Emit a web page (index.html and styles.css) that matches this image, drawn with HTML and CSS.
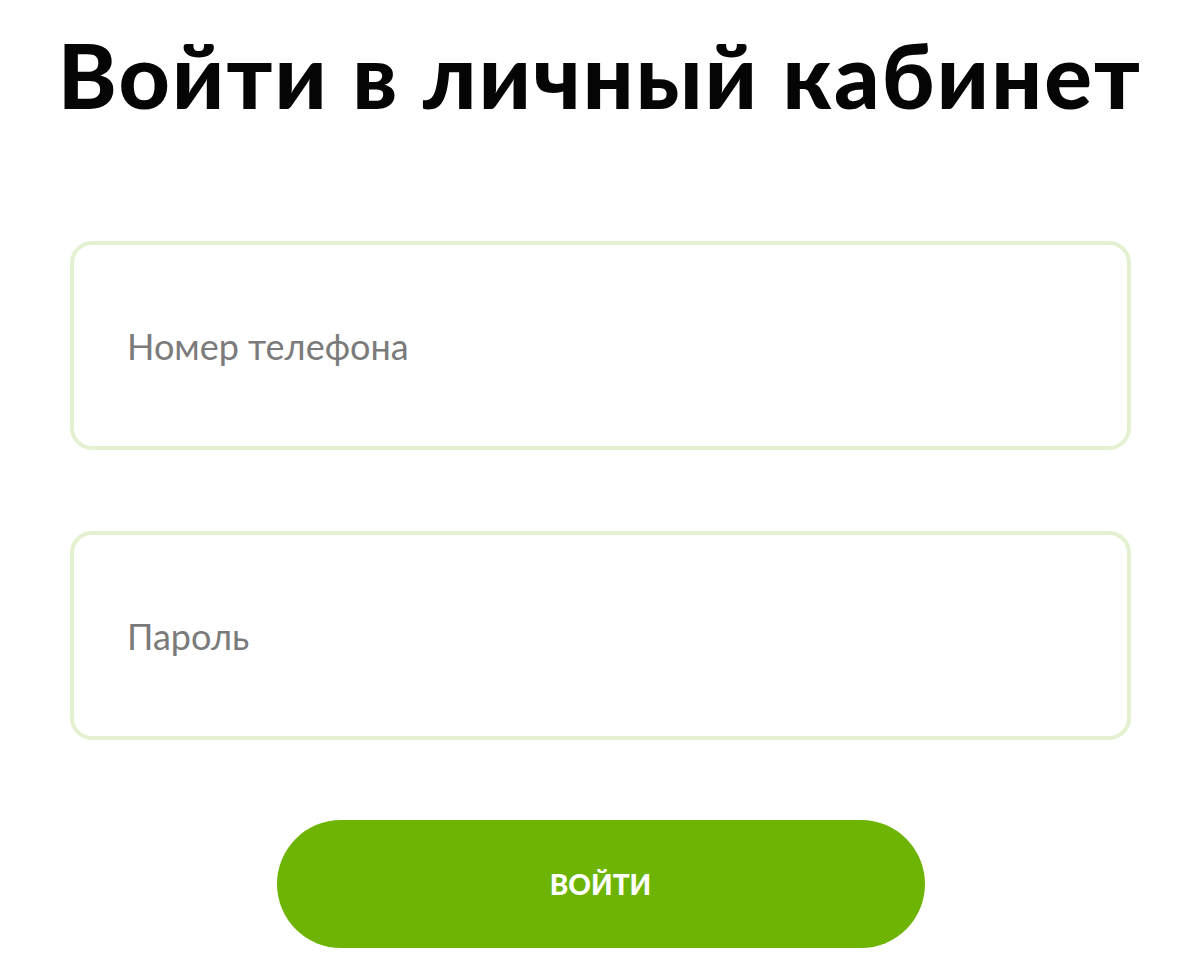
FILE: index.html
```html
<!DOCTYPE html>
<html lang="ru">
<head>
    <meta charset="UTF-8">
    <meta name="viewport" content="width=device-width, initial-scale=1.0">
    <title>Вход</title>
    <link rel="stylesheet" href="styles.css">
</head>
<body>
    <div class="login">
        <h1 class="login-title">Войти в личный кабинет</h1>
        <form class="login-form">
            <input class="field" type="tel" placeholder="Номер телефона">
            <input class="field" type="password" placeholder="Пароль">
            <button class="btn" type="submit">войти</button>
        </form>
    </div>
</body>
</html>
```

FILE: styles.css
```css
body {
    margin: 0;
    background: #fff;
    font-family: "Lato", "Noto Sans", sans-serif;
}
.login {
    width: 1200px;
    padding: 25px 0 0;
    box-sizing: border-box;
}
.login-title {
    margin: 0;
    text-align: center;
    font-size: 89px;
    line-height: 100px;
    font-weight: 900;
    color: #050505;
    letter-spacing: 2.2px;
}
.login-form {
    display: flex;
    flex-direction: column;
    align-items: center;
    gap: 81px;
    padding: 116px 69px 0 70px;
}
.field {
    width: 100%;
    height: 209px;
    box-sizing: border-box;
    border: 4px solid #e3f1d1;
    border-radius: 22px;
    padding: 0 53px;
    font-family: "Lato", "Noto Sans", sans-serif;
    font-size: 36px;
    color: #333;
    outline: none;
}
.field::placeholder {
    color: #7b7b7b;
}
.btn {
    width: 648px;
    height: 128px;
    margin-top: -1px;
    border: none;
    border-radius: 64px;
    background: #6db404;
    color: #fff;
    font-family: "Lato", "Noto Sans", sans-serif;
    font-weight: 900;
    font-size: 28px;
    text-transform: uppercase;
    cursor: pointer;
}
```
